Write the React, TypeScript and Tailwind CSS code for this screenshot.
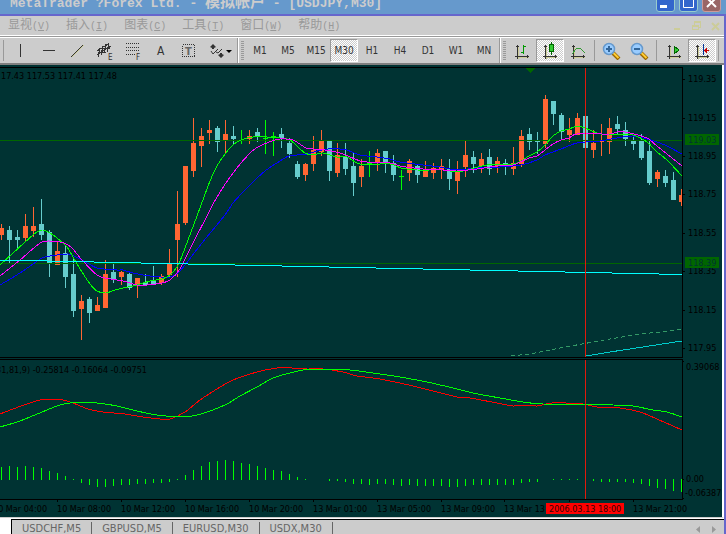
/**
 * Trading terminal window - candlestick chart with MACD pane
 */

import type { ReactNode } from 'react'

const MENUS = [
  { label: '显视', key: 'V' },
  { label: '插入', key: 'I' },
  { label: '图表', key: 'C' },
  { label: '工具', key: 'T' },
  { label: '窗口', key: 'W' },
  { label: '帮助', key: 'H' },
]

const PERIODS = ['M1', 'M5', 'M15', 'M30', 'H1', 'H4', 'D1', 'W1', 'MN']

const TABS = ['USDCHF,M5', 'GBPUSD,M5', 'EURUSD,M30', 'USDX,M30']

type Kind = 'u' | 'd' | 'x'

// [kind, high, body top, body bottom, low], one every STEP pixels
const CANDLES: [Kind, number, number, number, number][] = [
  ['u', 224, 228, 235, 240], ['d', 226, 230, 240, 263], ['d', 230, 237, 240, 248],
  ['u', 214, 226, 238, 242], ['u', 207, 226, 231, 237], ['d', 199, 224, 235, 240],
  ['d', 230, 232, 263, 277], ['u', 242, 251, 265, 265], ['d', 245, 253, 277, 288],
  ['d', 259, 274, 311, 317], ['u', 295, 301, 309, 340], ['d', 297, 299, 313, 323],
  ['u', 297, 305, 311, 311], ['u', 260, 274, 308, 308], ['d', 263, 272, 280, 283],
  ['u', 271, 272, 277, 285], ['d', 273, 274, 288, 290], ['u', 278, 278, 285, 298],
  ['d', 274, 282, 285, 285], ['d', 266, 280, 284, 284], ['u', 274, 276, 283, 285],
  ['u', 249, 263, 275, 277], ['u', 191, 224, 240, 277], ['u', 166, 166, 223, 225],
  ['u', 118, 143, 171, 177], ['u', 128, 136, 146, 167], ['u', 120, 130, 133, 144],
  ['d', 126, 128, 142, 152], ['u', 120, 134, 140, 154], ['d', 126, 136, 139, 145],
  ['x', 130, 140, 141, 144], ['u', 130, 136, 139, 144], ['d', 128, 132, 137, 142],
  ['x', 120, 138, 139, 154], ['x', 132, 136, 137, 156], ['d', 128, 134, 138, 148],
  ['d', 138, 143, 154, 158], ['d', 161, 164, 177, 179], ['u', 163, 164, 175, 181],
  ['u', 136, 150, 164, 171], ['u', 130, 140, 152, 156], ['d', 140, 141, 171, 181],
  ['u', 143, 155, 173, 177], ['d', 143, 157, 169, 175], ['d', 153, 166, 183, 196],
  ['u', 159, 166, 177, 187], ['x', 151, 163, 164, 177], ['u', 149, 153, 162, 171],
  ['d', 151, 151, 163, 173], ['d', 155, 163, 175, 181], ['x', 170, 176, 177, 190],
  ['u', 159, 161, 173, 181], ['d', 164, 166, 175, 183], ['u', 161, 170, 177, 177],
  ['u', 163, 168, 173, 179], ['u', 159, 166, 170, 179], ['d', 159, 169, 179, 190],
  ['u', 161, 172, 181, 194], ['u', 140, 155, 167, 177], ['d', 151, 157, 164, 173],
  ['u', 153, 159, 166, 173], ['d', 149, 157, 169, 175], ['u', 157, 161, 166, 173],
  ['d', 159, 163, 165, 175], ['u', 147, 163, 169, 175], ['u', 130, 136, 164, 167],
  ['d', 128, 134, 142, 150], ['d', 132, 141, 142, 154], ['u', 95, 99, 144, 148],
  ['d', 101, 101, 114, 125], ['d', 113, 115, 132, 140], ['u', 118, 130, 135, 142],
  ['u', 113, 118, 135, 135], ['d', 116, 116, 148, 148], ['u', 130, 143, 150, 158],
  ['u', 124, 141, 142, 156], ['u', 118, 128, 142, 154], ['d', 116, 124, 129, 134],
  ['d', 122, 130, 139, 146], ['d', 136, 140, 144, 150], ['d', 134, 141, 158, 160],
  ['d', 141, 151, 183, 185], ['u', 170, 172, 179, 187], ['d', 170, 176, 183, 187],
  ['d', 172, 180, 200, 200], ['u', 189, 195, 202, 206],
]

// free end of each histogram bar, 0 where no bar is drawn
const HISTOGRAM = [
  467, 466, 467, 466, 467, 468, 471, 473, 476, 479, 483, 485, 487, 487, 486,
  485, 485, 484, 484, 483, 483, 482, 479, 475, 470, 466, 462, 461, 460, 461,
  463, 464, 466, 468, 470, 471, 474, 477, 479, 0, 0, 481, 481, 482, 484,
  484, 485, 484, 484, 485, 486, 485, 486, 486, 486, 486, 487, 487, 486, 485,
  485, 485, 485, 485, 485, 483, 482, 482, 0, 479, 479, 479, 479, 0, 481,
  482, 482, 482, 482, 483, 484, 486, 488, 489, 491, 492,
]

const STEP = 8

const FAST_MA =
  '0,265 33,235 42,230 50,233 57,238 67,247 73,257 82,272 90,284 97,291 106,293 115,290 128,287 137,285 150,281 162,279 170,275 177,267 182,256 197,216 210,181 217,166 225,154 233,145 241,140 253,137 267,137 280,138 290,140 298,147 305,153 313,155 323,153 337,157 347,157 360,164 390,164 401,168 417,170 443,170 457,172 467,170 487,165 513,164 521,161 529,156 537,152 545,145 553,136 561,131 569,129 577,126 585,128 597,133 607,135 617,134 633,135 647,142 657,152 667,160 682,176'
const MID_MA =
  '0,276 20,260 42,242 60,242 68,245 73,249 82,260 97,275 105,278 123,281 137,285 147,285 162,283 170,280 180,269 193,243 207,216 217,197 233,173 249,154 258,147 272,141 280,139 293,140 306,148 313,149 325,150 340,153 360,161 367,162 390,163 400,166 423,169 443,170 457,171 477,169 497,166 513,165 529,158 537,156 545,150 553,144 561,140 569,138 577,134 610,134 617,132 625,132 647,138 657,146 682,166'
const SLOW_MA =
  '0,285 20,273 33,264 42,258 50,256 67,254 72,255 82,260 97,268 117,270 123,270 133,273 150,276 170,277 180,271 202,243 225,215 233,203 249,186 265,171 280,161 289,156 307,154 317,151 328,149 340,149 347,150 360,155 377,157 390,159 400,162 423,165 440,167 457,170 477,168 500,167 521,165 537,160 545,155 561,149 577,143 600,141 617,138 633,136 647,139 657,142 667,146 682,154'
const MACD =
  '0,414 13,409 27,404 40,400 55,399 63,400 73,403 88,409 103,412 125,414 143,417 160,419 170,419 185,412 200,400 217,389 233,380 257,372 277,368 292,368 307,369 323,369 343,372 357,376 380,379 413,386 457,397 470,398 497,403 513,406 523,405 537,406 552,403 583,404 597,407 620,408 640,412 657,419 682,430'
const SIGNAL =
  '0,427 20,421 57,406 70,403 83,402 97,403 117,406 137,411 157,415 183,417 197,415 210,411 227,404 240,396 257,387 273,378 290,373 303,370 323,369 350,370 373,373 400,377 427,382 453,388 473,393 500,398 523,402 543,404 613,405 633,406 653,410 667,412 682,417'

const PRICES: [string, number][] = [
  ['119.35', 79], ['119.15', 118], ['118.95', 156], ['118.75', 194],
  ['118.55', 233], ['118.35', 271], ['118.15', 310], ['117.95', 348],
]

const TIMES: [string, number][] = [
  ['10 Mar 04:00', -7], ['10 Mar 08:00', 57], ['10 Mar 12:00', 121],
  ['10 Mar 16:00', 185], ['10 Mar 20:00', 249], ['13 Mar 01:00', 313],
  ['13 Mar 05:00', 377], ['13 Mar 09:00', 441], ['13 Mar 13', 504],
  ['13 Mar 21:00', 633],
]

function candleFill(kind: Kind) {
  if (kind === 'u') return '#ff6633'
  if (kind === 'd') return '#66cccc'
  return '#00ff00'
}

// Smooth path through the points of a "x,y x,y" list
function curve(points: string) {
  const p = points.split(' ').map((pair) => pair.split(',').map(Number))
  let d = `M${p[0][0]} ${p[0][1]}`
  for (let i = 0; i < p.length - 1; i++) {
    const a = p[Math.max(i - 1, 0)]
    const b = p[i]
    const c = p[i + 1]
    const e = p[Math.min(i + 2, p.length - 1)]
    d += `C${b[0] + (c[0] - a[0]) / 8} ${b[1] + (c[1] - a[1]) / 8} ${c[0] - (e[0] - b[0]) / 8} ${c[1] - (e[1] - b[1]) / 8} ${c[0]} ${c[1]}`
  }
  return d
}

function Chart() {
  return (
    <svg
      viewBox="0 65 722 452"
      preserveAspectRatio="xMinYMin slice"
      className="block h-[452px] w-full shrink-0 bg-[#003333] font-['DejaVu_Sans_Condensed','DejaVu_Sans',sans-serif] text-[9px]"
      shapeRendering="crispEdges"
    >
      {/* Pane frames */}
      <g fill="#000">
        <rect x="0" y="67" width="683" height="1" />
        <rect x="0" y="357" width="683" height="1" />
        <rect x="0" y="359" width="683" height="1" />
        <rect x="0" y="499" width="683" height="1" />
        <rect x="682" y="67" width="1" height="291" />
        <rect x="682" y="359" width="1" height="141" />
        <rect x="683" y="361" width="1" height="1" />
        <rect x="683" y="479" width="1" height="1" />
        <rect x="683" y="498" width="1" height="1" />
      </g>
      <path d="M525 68h10l-5 5z" fill="#006600" />

      {/* Candles */}
      {CANDLES.map(([kind, high, top, bottom, low], i) => {
        const x = 1 + i * STEP
        return (
          <g key={i} fill={candleFill(kind)}>
            <rect x={x} y={high} width="1" height={low - high} />
            <rect x={x - 2} y={top} width={i === 85 ? 3 : 5} height={bottom - top} />
          </g>
        )
      })}
      <rect x="0" y="140" width="682" height="1" fill="#006600" />
      <rect x="0" y="263" width="682" height="1" fill="#006600" />

      {/* Averages */}
      <g fill="none" strokeWidth="1">
        <path d={curve(SLOW_MA)} stroke="#0000ff" />
        <path d={curve(FAST_MA)} stroke="#00ff00" />
        <path d={curve(MID_MA)} stroke="#ff00ff" />
        <path
          d="M0 260.5H47M47 261.5H94M94 262.5H141M141 263.5H188M188 264.5H235M235 265.5H282M282 266.5H329M329 267.5H376M376 268.5H423M423 269.5H470M470 270.5H518M518 271.5H565M565 272.5H612M612 273.5H659M659 274.5H682"
          stroke="#00ffff"
        />
        <polyline
          points="511,356 530,354 550,350 560,348 582,344 610,339 640,334 660,332 682,329"
          stroke="#339966"
          strokeDasharray="4 3"
        />
        <polyline points="586,356 610,352 682,341" stroke="#00cccc" />
        <path d={curve(MACD)} stroke="#ff0000" />
        <path d={curve(SIGNAL)} stroke="#00ff00" />
      </g>

      {HISTOGRAM.map((end, i) =>
        end === 0 ? null : (
          <rect
            key={i}
            x={1 + i * STEP}
            y={end < 480 ? end : 479}
            width="1"
            height={end < 480 ? 480 - end : end - 479}
            fill="#00ff00"
          />
        )
      )}

      {/* Crosshair */}
      <rect x="585" y="68" width="1" height="289" fill="#e11a0c" />
      <rect x="585" y="360" width="1" height="139" fill="#e11a0c" />

      {/* Readouts */}
      <text x="1" y="79">17.43 117.53 117.41 117.48</text>
      <text x="147" y="373" textAnchor="end">31,81,9) -0.25814 -0.16064 -0.09751</text>

      {/* Price axis */}
      {PRICES.map(([label, y]) => (
        <g key={label}>
          <rect x="683" y={y} width="2" height="1" />
          <text x="688" y={y + 3}>{label}</text>
        </g>
      ))}
      <rect x="685" y="134" width="34" height="11" fill="#006600" />
      <text x="688" y="143" fill="#003333">119.03</text>
      <rect x="685" y="257" width="34" height="11" fill="#006600" />
      <text x="688" y="266" fill="#003333">118.39</text>
      <text x="686" y="370">0.39068</text>
      <text x="686" y="482">0.00</text>
      <text x="685" y="496">-0.06387</text>

      {/* Time axis */}
      {TIMES.map(([label, x]) => (
        <g key={label}>
          <rect x={x} y="500" width="1" height="2" />
          <text x={x} y="512">{label}</text>
        </g>
      ))}
      <rect x="569" y="500" width="1" height="2" />
      <rect x="546" y="503" width="78" height="11" fill="#ff0000" />
      <text x="549" y="512" fill="#330000">2006.03.13 18:00</text>
    </svg>
  )
}

function ToolButton({
  label,
  pressed = false,
  children,
}: {
  label: string
  pressed?: boolean
  children: ReactNode
}) {
  return (
    <button
      type="button"
      aria-label={label}
      aria-pressed={pressed}
      className={
        pressed
          ? 'flex h-[23px] w-7 shrink-0 items-center justify-center border border-t-[#999999] border-r-white border-b-white border-l-[#999999] bg-[repeating-conic-gradient(#ffffff_0_25%,#cccccc_0_50%)] bg-size-[2px_2px]'
          : 'flex h-[23px] w-7 shrink-0 items-center justify-center'
      }
    >
      {children}
    </button>
  )
}

function Glyph({ children }: { children: ReactNode }) {
  return (
    <svg
      viewBox="0 0 20 18"
      className="h-[18px] w-5 shrink-0 font-['DejaVu_Sans_Condensed','DejaVu_Sans',sans-serif]"
      fill="none"
      stroke="#333333"
      shapeRendering="crispEdges"
    >
      {children}
    </svg>
  )
}

// Pair of axes shared by the chart type icons
function Axes() {
  return (
    <>
      <path d="M6.5 4V17M7 15.5H17" stroke="#cccc99" />
      <path d="M5.5 3V17M3 14.5H17M4 4.5H7M15.5 13V16" />
    </>
  )
}

function Magnifier({ plus = false }: { plus?: boolean }) {
  return (
    <svg viewBox="0 0 20 18" className="h-[18px] w-5 shrink-0" fill="none">
      <path d="M12 11l6 6" stroke="#996600" strokeWidth="4" />
      <path d="M12 10.500l5.500 5.500" stroke="#ffcc33" strokeWidth="2" />
      <circle cx="8" cy="7" r="5.500" fill="#99ccff" stroke="#6699cc" strokeWidth="1.500" />
      <path d={plus ? 'M5 7h6M8 4v6' : 'M5 7h6'} stroke="#336699" strokeWidth="2" />
    </svg>
  )
}

function Divider() {
  return <span className="h-[21px] w-px shrink-0 bg-[#999999]" />
}

function Grip() {
  return (
    <>
      <span className="ml-px h-[25px] w-px shrink-0 bg-[#999999]" />
      <span className="mr-0.5 h-[25px] w-px shrink-0 bg-white" />
      <span className="mr-0.5 h-5 w-[3px] shrink-0 bg-[repeating-linear-gradient(#999999_0_1px,#cccccc_1px_2px)]" />
    </>
  )
}

function TitleBar() {
  return (
    <header className="flex h-4 shrink-0 items-end justify-between overflow-hidden border-b-2 border-[#6666cc] bg-[#6699cc] pr-[5px] pl-2.5">
      <h1 className="mb-0.5 font-['Liberation_Mono','Noto_Sans_CJK_SC',monospace] text-[13px] leading-4 font-bold whitespace-pre text-[#cccccc]">
        MetaTrader ?Forex Ltd. - <span className="text-[15px]">模拟帐户</span> - [USDJPY,M30]
      </h1>
      <div className="mb-0.5 flex gap-1">
        <button type="button" aria-label="Minimize" className="h-5 w-[19px] rounded-[3px] border border-[#99cccc] bg-[#3366cc]">
          <svg viewBox="0 0 17 18" className="block h-[18px] w-[17px]">
            <rect x="3" y="12" width="7" height="3" fill="#fff" />
          </svg>
        </button>
        <button type="button" aria-label="Maximize" className="h-5 w-[19px] rounded-[3px] border border-[#99cccc] bg-[#3366cc]">
          <svg viewBox="0 0 17 18" className="block h-[18px] w-[17px]">
            <path d="M3.500 4.500h10v10h-10zM3 5.500h11" fill="none" stroke="#fff" />
          </svg>
        </button>
        <button type="button" aria-label="Close" className="h-5 w-[19px] rounded-[3px] border border-[#cc9999] bg-[#996666]">
          <svg viewBox="0 0 17 18" className="block h-[18px] w-[17px]">
            <path d="M4 5l9 9M13 5l-9 9" stroke="#fff" strokeWidth="2" />
          </svg>
        </button>
      </div>
    </header>
  )
}

function MenuBar() {
  return (
    <nav className="flex h-[19px] shrink-0 items-center justify-between bg-[#cccccc] pr-[3px] pl-2">
      <div className="flex gap-4">
        {MENUS.map(({ label, key }) => (
          <button
            key={key}
            type="button"
            className="font-['Noto_Sans_CJK_SC',sans-serif] text-[12px] leading-4 whitespace-nowrap text-[#999999]"
          >
            {label}
            <span className="font-['Liberation_Mono',monospace] text-[10px]">
              (<u>{key}</u>)
            </span>
          </button>
        ))}
      </div>
      <div className="flex gap-[9px]">
        <button type="button" aria-label="Minimize chart">
          <svg viewBox="0 0 10 10" className="block h-2.5 w-2.5">
            <rect x="1" y="7" width="6" height="2" fill="#cccc99" />
          </svg>
        </button>
        <button type="button" aria-label="Restore chart">
          <svg viewBox="0 0 10 10" className="block h-2.5 w-2.5" fill="none" stroke="#cccc99" shapeRendering="crispEdges">
            <path d="M2.500 4V.500h6V6.500H7M2 1.500h7M.500 4.500h6v4h-6zM0 5.500h7" />
          </svg>
        </button>
        <button type="button" aria-label="Close chart">
          <svg viewBox="0 0 10 10" className="block h-2.5 w-2.5">
            <path d="M1 2l7 7M8 2l-7 7" stroke="#cccc99" strokeWidth="2" />
          </svg>
        </button>
      </div>
    </nav>
  )
}

function Toolbar() {
  return (
    <div className="flex h-[30px] shrink-0 items-center overflow-hidden border-t border-b-2 border-t-white border-b-[#808080] bg-[#cccccc] pt-0.5 shadow-[inset_0_1px_0_#999999,inset_0_2px_0_#ffffff]">
      <span className="mr-[3px] ml-[3px] h-[21px] w-px shrink-0 bg-[#999999]" />

      {/* Drawing tools */}
      <ToolButton label="Vertical line">
        <Glyph><path d="M9.500 2V15" /></Glyph>
      </ToolButton>
      <ToolButton label="Horizontal line">
        <Glyph><path d="M4 8.500H16" /></Glyph>
      </ToolButton>
      <ToolButton label="Trend line">
        <Glyph>
          <path d="M5 15L17 3" stroke="#cccc99" />
          <path d="M4 15L16 3" />
        </Glyph>
      </ToolButton>
      <ToolButton label="Channel">
        <Glyph>
          <path d="M2 9L13 2M2 13L16 4M5 6l-2 9M8 4l-2 9M11 2l-2 9M14 1l-2 9M3 10h8M8 6h7" />
          <text x="13" y="18" fontSize="8" fill="#333333" stroke="none">E</text>
        </Glyph>
      </ToolButton>
      <ToolButton label="Fibonacci">
        <Glyph>
          <path d="M3 1.500H17M3 5.500H17M3 8.500H17M3 12.500H12" strokeDasharray="1 1" />
          <text x="13" y="18" fontSize="8" fill="#333333" stroke="none">F</text>
        </Glyph>
      </ToolButton>
      <ToolButton label="Text">
        <Glyph>
          <text x="6" y="13" fontSize="12" fill="#333333" stroke="none">A</text>
        </Glyph>
      </ToolButton>
      <ToolButton label="Text label">
        <Glyph>
          <rect x="3.500" y="2.500" width="12" height="12" strokeDasharray="1 1" />
          <text x="6" y="13" fontSize="11" fontWeight="bold" fill="#666666" stroke="none">T</text>
        </Glyph>
      </ToolButton>
      <button type="button" aria-label="Arrows" className="flex h-[23px] w-[33px] shrink-0 items-center justify-center">
        <svg viewBox="0 0 24 18" className="h-[18px] w-6" fill="#333333">
          <path d="M5 2l3 3-2 1v1H4V6L2 5zM13 16l-3-3 2-1v-1h2v1l2 1z" />
          <path d="M3 9l2 3 5-5M8 10l2 1 4-4" fill="none" stroke="#333333" />
          <path d="M18 8h6l-3 3z" fill="#000" />
        </svg>
      </button>

      {/* Periods */}
      <Grip />
      {PERIODS.map((period) => (
        <ToolButton key={period} label={period} pressed={period === 'M30'}>
          <span className="font-['DejaVu_Sans_Condensed','DejaVu_Sans',sans-serif] text-[10px] text-[#333333]">
            {period}
          </span>
        </ToolButton>
      ))}

      {/* Chart types and zoom */}
      <Grip />
      <ToolButton label="Bar chart">
        <Glyph>
          <Axes />
          <path d="M11.500 3V12M9 10.500H11M12 4.500H14" stroke="#009900" />
        </Glyph>
      </ToolButton>
      <ToolButton label="Candlesticks" pressed>
        <Glyph>
          <Axes />
          <path d="M11.500 0V13" stroke="#006600" />
          <rect x="9.500" y="2.500" width="4" height="7" fill="#33cc33" stroke="#006600" />
        </Glyph>
      </ToolButton>
      <ToolButton label="Line chart">
        <Glyph>
          <Axes />
          <path d="M4 12L8 7L11 6L13 7L17 11" stroke="#339933" />
        </Glyph>
      </ToolButton>
      <span className="w-0.5 shrink-0" />
      <Divider />
      <span className="w-0.5 shrink-0" />
      <ToolButton label="Zoom in">
        <Magnifier plus />
      </ToolButton>
      <ToolButton label="Zoom out">
        <Magnifier />
      </ToolButton>
      <span className="w-[3px] shrink-0" />
      <Divider />
      <span className="w-[3px] shrink-0" />
      <ToolButton label="Auto scroll">
        <Glyph>
          <Axes />
          <path d="M10 4l5 4-5 4z" fill="#33cc33" stroke="#006600" strokeWidth="1" />
        </Glyph>
      </ToolButton>
      <ToolButton label="Chart shift" pressed>
        <Glyph>
          <Axes />
          <path d="M11.500 2V13" stroke="#003399" />
          <path d="M12 8.500H17M14.500 6V11M13.500 7V10" stroke="#cc0000" />
        </Glyph>
      </ToolButton>
      <span className="w-0.5 shrink-0" />
      <Divider />
    </div>
  )
}

function ChartTabs() {
  return (
    <div className="flex h-5 shrink-0 bg-white pt-px">
      <div className="ml-[11px] flex flex-1 items-start justify-between border-t border-l border-black bg-[#cccccc]">
        <div className="flex pt-0.5" role="tablist">
          {TABS.map((tab) => (
            <button
              key={tab}
              type="button"
              role="tab"
              className="border-r border-[#666666] px-2.5 font-['DejaVu_Sans_Condensed','DejaVu_Sans',sans-serif] text-[11px] leading-[14px] text-[#666666]"
            >
              {tab}
            </button>
          ))}
        </div>
        <div className="flex gap-3 pt-1.5 pr-2">
          <button type="button" aria-label="Scroll tabs left">
            <svg viewBox="0 0 4 7" className="block h-[7px] w-1" fill="#999999">
              <path d="M4 0v7L0 3.500z" />
            </svg>
          </button>
          <button type="button" aria-label="Scroll tabs right">
            <svg viewBox="0 0 4 7" className="block h-[7px] w-1" fill="#999999">
              <path d="M0 0v7l4-3.500z" />
            </svg>
          </button>
        </div>
      </div>
    </div>
  )
}

export default function App() {
  return (
    <div className="flex h-screen flex-col overflow-hidden bg-[#cccccc]">
      <TitleBar />
      <div className="flex flex-1 flex-col overflow-hidden border-r-2 border-[#6666cc]">
        <MenuBar />
        <Toolbar />
        <main className="shrink-0 border-r-2 border-b border-r-white border-b-[#cccccc]">
          <Chart />
        </main>
        <ChartTabs />
      </div>
    </div>
  )
}
